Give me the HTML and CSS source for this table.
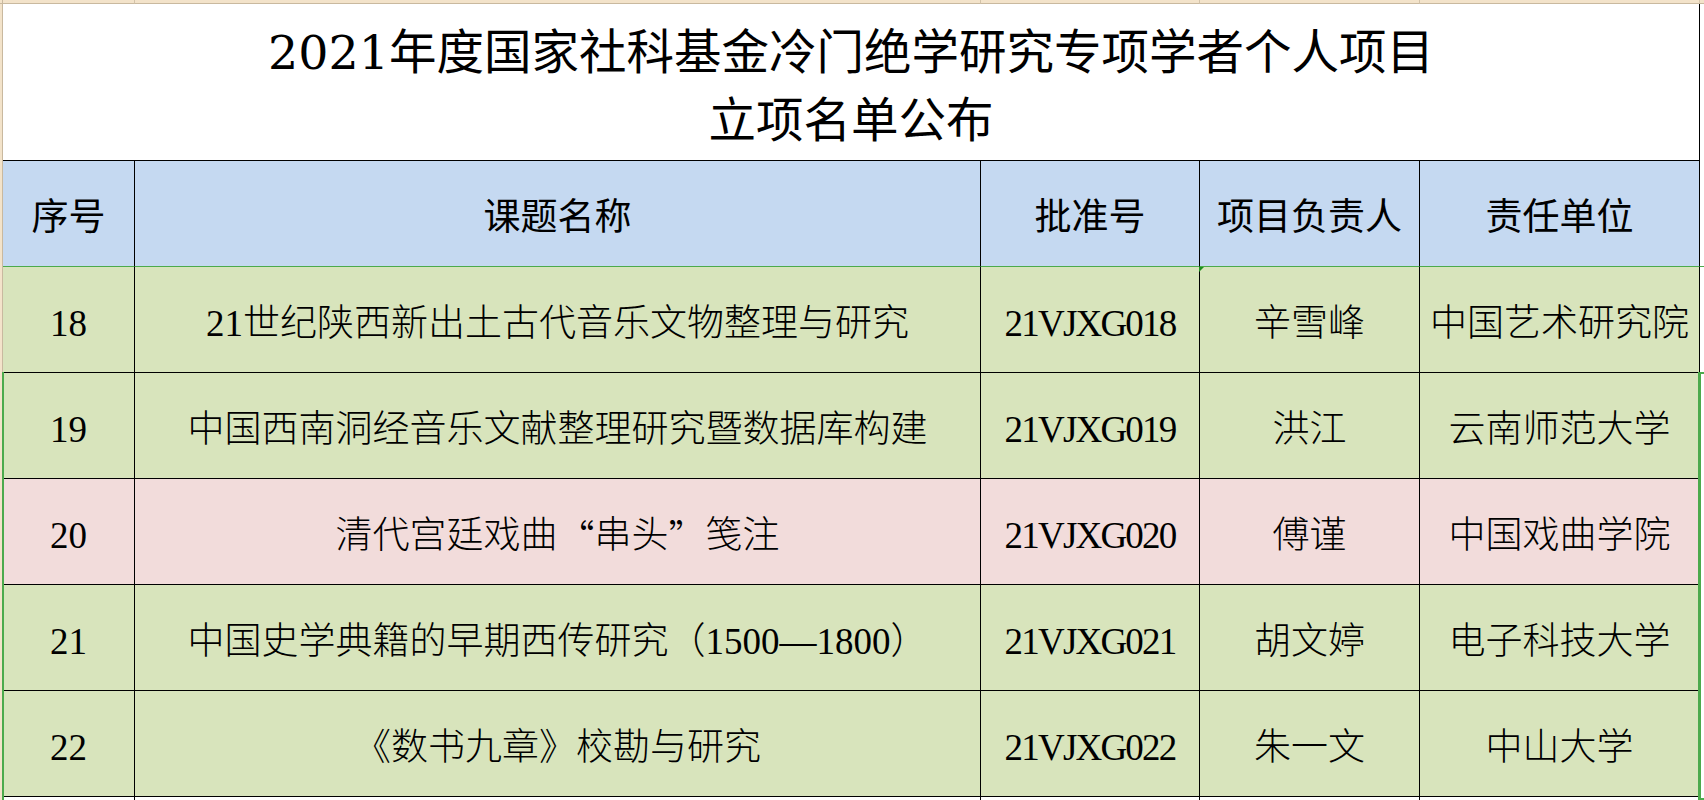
FILE: index.html
```html
<!DOCTYPE html>
<html lang="zh-CN">
<head>
<meta charset="utf-8">
<title>2021年度国家社科基金冷门绝学研究专项学者个人项目立项名单公布</title>
<link rel="stylesheet" href="styles.css">
</head>
<body>
<div class="sheet">
  <!-- column header strip -->
  <div class="ch corner"></div>
  <div class="ch"></div>
  <div class="ch"></div>
  <div class="ch"></div>
  <div class="ch"></div>
  <div class="ch"></div>
  <div class="ch last"></div>

  <!-- title -->
  <div class="rh"></div>
  <div class="title">
    <div class="tline"><span class="tdig">2021</span>年度国家社科基金冷门绝学研究专项学者个人项目</div>
    <div class="tline">立项名单公布</div>
  </div>
  <div class="fill"></div>

  <!-- header -->
  <div class="rh"></div>
  <div class="cell hd">序号</div>
  <div class="cell hd">课题名称</div>
  <div class="cell hd">批准号</div>
  <div class="cell hd">项目负责人</div>
  <div class="cell hd">责任单位</div>
  <div class="fill hdfill"></div>

  <div class="rh"></div>
  <div class="cell g">18</div>
  <div class="cell g">21世纪陕西新出土古代音乐文物整理与研究</div>
  <div class="cell g code">21VJXG018</div>
  <div class="cell g err">辛雪峰</div>
  <div class="cell g">中国艺术研究院</div>
  <div class="fill"></div>

  <div class="rh"></div>
  <div class="cell g">19</div>
  <div class="cell g">中国西南洞经音乐文献整理研究暨数据库构建</div>
  <div class="cell g code">21VJXG019</div>
  <div class="cell g">洪江</div>
  <div class="cell g">云南师范大学</div>
  <div class="fill"></div>

  <div class="rh"></div>
  <div class="cell p">20</div>
  <div class="cell p">清代宫廷戏曲<span class="q">“</span>串头<span class="q">”</span>笺注</div>
  <div class="cell p code">21VJXG020</div>
  <div class="cell p">傅谨</div>
  <div class="cell p">中国戏曲学院</div>
  <div class="fill"></div>

  <div class="rh"></div>
  <div class="cell g">21</div>
  <div class="cell g">中国史学典籍的早期西传研究（1500—1800）</div>
  <div class="cell g code">21VJXG021</div>
  <div class="cell g">胡文婷</div>
  <div class="cell g">电子科技大学</div>
  <div class="fill"></div>

  <div class="rh"></div>
  <div class="cell g">22</div>
  <div class="cell g">《数书九章》校勘与研究</div>
  <div class="cell g code">21VJXG022</div>
  <div class="cell g">朱一文</div>
  <div class="cell g">中山大学</div>
  <div class="fill"></div>

  <div class="rh"></div>
  <div class="cell w"></div>
  <div class="cell w"></div>
  <div class="cell w"></div>
  <div class="cell w"></div>
  <div class="cell w"></div>
  <div class="fill"></div>

  <!-- selection outline over row 19 -->
  <div class="sel"></div>
</div>
</body>
</html>
```

FILE: styles.css
```css
html, body {
  margin: 0;
  padding: 0;
  background: #ffffff;
}

.sheet {
  position: relative;
  width: 1704px;
  height: 800px;
  overflow: hidden;
  display: grid;
  grid-template-columns: 3px 132px 846px 219px 220px 280px 1fr;
  grid-template-rows: 4px 157px repeat(6, 106px) 1fr;
  background: #ffffff;
}

.ch {
  box-sizing: border-box;
  background: #f3e3ca;
  border-bottom: 1px solid #c9b99f;
  border-right: 1px solid #d3c3a9;
}
.ch.corner {
  border-right: 1px solid #c9b99f;
}
.ch.last {
  border-right: none;
}

.rh {
  box-sizing: border-box;
  background: #f3e3ca;
  border-right: 1px solid #c9b99f;
}

.fill {
  background: #ffffff;
}
.hdfill {
  box-sizing: border-box;
  border-bottom: 1px solid #4caa4c;
}

.title {
  grid-column: 2 / 7;
  box-sizing: border-box;
  border-right: 1px solid #000;
  border-bottom: 1px solid #000;
  background: #fff;
  display: flex;
  flex-direction: column;
  align-items: center;
  justify-content: center;
  padding-top: 10px;
  font-family: "Liberation Serif", "Noto Sans CJK SC", serif;
  font-size: 47.5px;
  line-height: 68px;
  color: #000;
  white-space: nowrap;
}
.tdig {
  font-family: "DejaVu Serif", "Liberation Serif", serif;
}

.cell {
  box-sizing: border-box;
  border-right: 1px solid #000;
  border-bottom: 1px solid #000;
  display: flex;
  align-items: center;
  justify-content: center;
  white-space: nowrap;
  color: #000;
  font-family: "Liberation Serif", "Noto Sans CJK SC", serif;
  font-size: 37px;
  font-weight: 300;
  line-height: 50px;
  padding-top: 8px;
}

.code {
  letter-spacing: -1.8px;
}

.hd {
  background: #c5d9f1;
  border-bottom: 1px solid #4caa4c;
  font-family: "Noto Sans CJK SC", sans-serif;
  font-size: 37px;
  font-weight: 400;
  padding-top: 0;
}

.g { background: #d8e4bc; }
.p { background: #f2dcdb; }
.w { background: #ffffff; }

.q {
  font-family: "Noto Sans CJK SC", sans-serif;
  font-feature-settings: "fwid" 1;
}

.err {
  position: relative;
}
.err::before {
  content: "";
  position: absolute;
  left: -1px;
  top: 0;
  width: 0;
  height: 0;
  border-top: 5px solid #1f8f1f;
  border-right: 5px solid transparent;
}

.sel {
  position: absolute;
  grid-row: 5;
  grid-column: 1 / -1;
  top: -1px;
  bottom: 0;
  left: 2px;
  right: 3px;
  border-left: 2px solid #4caa4c;
  border-right: 3px solid #4caa4c;
  pointer-events: none;
}
.sel::before,
.sel::after {
  content: "";
  position: absolute;
  right: -6px;
  width: 6px;
  height: 2px;
  background: #4caa4c;
}
.sel::before { top: 0; }
.sel::after { bottom: 0; }
```
